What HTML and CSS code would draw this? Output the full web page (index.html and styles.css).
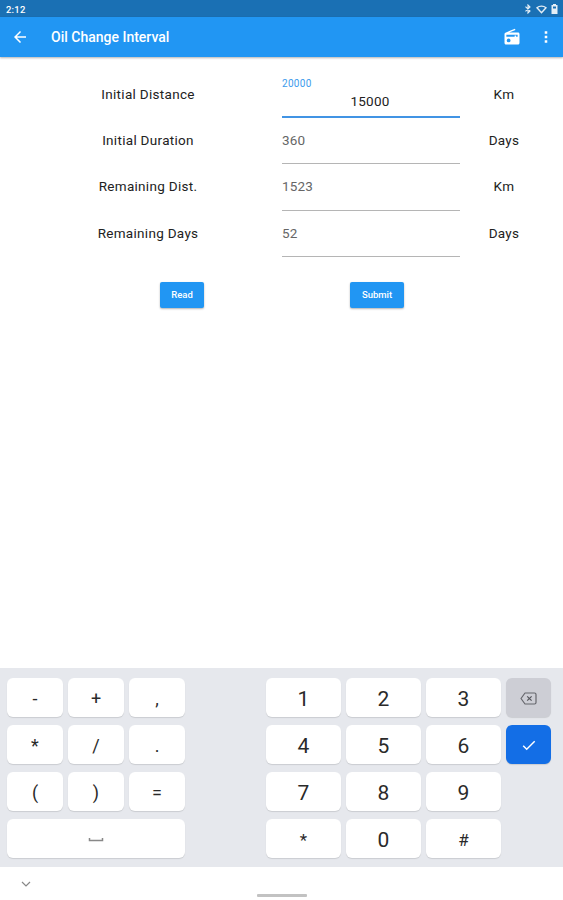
FILE: index.html
```html
<!DOCTYPE html>
<html lang="en">
<head>
    <meta charset="UTF-8">
    <meta name="viewport" content="width=device-width, initial-scale=1.0">
    <title>Oil Change Interval</title>
    <link rel="stylesheet" href="styles.css">
</head>
<body>
    <div class="status-bar">
        <span class="clock">2:12</span>
        <div class="status-icons">
            <svg width="8" height="10" viewBox="0 0 8 10"><path d="M1.5 2.700L6 7L4 9V1L6 3L1.500 7.300" fill="none" stroke="#e4eef6" stroke-width="1.100"/></svg>
            <svg width="11" height="9" viewBox="0 0 11 9"><path d="M1 2.700C3.500.6 7.500.6 10 2.700L5.500 7.800Z" fill="none" stroke="#e4eef6" stroke-width="1.400"/></svg>
            <svg width="7" height="10" viewBox="0 0 7 10"><path d="M2 0H5V1H6.500V10H.5V1H2Z" fill="#e4eef6"/><path d="M2 2.500H5V4.500H2Z" fill="#1a70b4"/></svg>
        </div>
    </div>

    <header class="app-bar">
        <svg class="back" width="18" height="18" viewBox="0 0 24 24"><path d="M20 11H7.800l5.600-5.600L12 4l-8 8 8 8 1.400-1.400L7.800 13H20z" fill="#fff"/></svg>
        <h1>Oil Change Interval</h1>
        <svg class="radio" width="18" height="18" viewBox="0 0 24 24"><path d="M3.200 6.200C2.500 6.500 2 7.200 2 8v12c0 1.100.9 2 2 2h16c1.100 0 2-.9 2-2V8c0-1.100-.9-2-2-2H8.300l8.300-3.300L15.900 1z" fill="#fff"/><path d="M4.500 9h15v2.500h-2V10h-2v1.500h-11z" fill="#2196f3"/><circle cx="7.500" cy="16.500" r="2.500" fill="#2196f3"/></svg>
        <svg class="more" width="18" height="18" viewBox="0 0 24 24"><path d="M10.300 4.300h3.400v3.400h-3.400zM10.300 10.300h3.400v3.400h-3.400zM10.300 16.300h3.400v3.400h-3.400z" fill="#fff"/></svg>
    </header>

    <main>
        <form class="interval-form">
            <div class="row">
                <label for="initDist">Initial Distance</label>
                <div class="field active">
                    <span class="hint">20000</span>
                    <input type="text" id="initDist" value="15000">
                </div>
                <span class="unit">Km</span>
            </div>
            <div class="row">
                <label for="initDur">Initial Duration</label>
                <div class="field"><input type="text" id="initDur" value="360"></div>
                <span class="unit">Days</span>
            </div>
            <div class="row">
                <label for="remDist">Remaining Dist.</label>
                <div class="field"><input type="text" id="remDist" value="1523"></div>
                <span class="unit">Km</span>
            </div>
            <div class="row">
                <label for="remDays">Remaining Days</label>
                <div class="field"><input type="text" id="remDays" value="52"></div>
                <span class="unit">Days</span>
            </div>
            <div class="actions">
                <button type="button" class="btn read">Read</button>
                <button type="button" class="btn submit">Submit</button>
            </div>
        </form>
    </main>

    <div class="keyboard">
        <div class="keys symbols">
            <button class="key">-</button>
            <button class="key">+</button>
            <button class="key">,</button>
            <button class="key">*</button>
            <button class="key">/</button>
            <button class="key">.</button>
            <button class="key">(</button>
            <button class="key">)</button>
            <button class="key">=</button>
            <button class="key space">
                <svg width="16" height="6" viewBox="0 0 16 6"><path d="M1.500 1v2.500h13V1" fill="none" stroke="#888" stroke-width="1.500"/></svg>
            </button>
        </div>
        <div class="keys numbers">
            <button class="key">1</button>
            <button class="key">2</button>
            <button class="key">3</button>
            <button class="key">4</button>
            <button class="key">5</button>
            <button class="key">6</button>
            <button class="key">7</button>
            <button class="key">8</button>
            <button class="key">9</button>
            <button class="key sign">*</button>
            <button class="key">0</button>
            <button class="key sign">#</button>
        </div>
        <div class="keys side">
            <button class="key delete">
                <svg width="17" height="13" viewBox="0 0 17 13"><path d="M5 1H14.500Q16 1 16 2.500V10.500Q16 12 14.500 12H5L1 6.500Z" fill="none" stroke="#65666c" stroke-width="1.200" stroke-linejoin="round"/><path d="M7.200 4.300L11.600 8.700M11.600 4.300L7.200 8.700" stroke="#55565c" stroke-width="1.200"/></svg>
            </button>
            <button class="key enter">
                <svg width="14" height="11" viewBox="0 0 14 11"><path d="M1.200 5.700L4.700 9.200L12.700 1.200" fill="none" stroke="#fff" stroke-width="1.500"/></svg>
            </button>
        </div>
    </div>

    <div class="nav-bar">
        <svg class="hide" width="10" height="7" viewBox="0 0 10 7"><path d="M1 1L5 5L9 1" fill="none" stroke="#888" stroke-width="1.200"/></svg>
        <div class="handle"></div>
    </div>
</body>
</html>
```
FILE: styles.css
```css
* {
    margin: 0;
    padding: 0;
    box-sizing: border-box;
    font-family: Roboto, "Liberation Sans", sans-serif;
}

body {
    height: 900px;
    display: flex;
    flex-direction: column;
    background: #fff;
    color: #222;
    overflow: hidden;
}

svg {
    display: block;
    flex: none;
}

.status-bar {
    height: 17px;
    padding: 1px 5px 0 6px;
    display: flex;
    align-items: center;
    justify-content: space-between;
    background: #1a70b4;
    color: #fff;
}

.clock {
    font-size: 9.5px;
    font-weight: 500;
    letter-spacing: 0.2px;
}

.status-icons {
    display: flex;
    align-items: center;
    gap: 4px;
}

.app-bar {
    height: 40px;
    padding: 0 8px 0 11px;
    display: flex;
    align-items: center;
    background: #2196f3;
    color: #fff;
    box-shadow: 0 1px 2px rgba(0,0,0,0.3);
}

.app-bar h1 {
    flex: 1;
    margin-left: 22px;
    font-size: 14px;
    font-weight: 500;
}

.more {
    margin-left: 16px;
}

main {
    flex: 1;
    padding: 15px 15px 0 14px;
}

.row {
    height: 46.2px;
    display: grid;
    grid-template-columns: 268px 178px 88px;
    align-items: center;
    text-align: center;
    font-size: 13.5px;
    letter-spacing: 0.3px;
}

.row label,
.unit {
    padding-bottom: 2px;
}

.row:last-of-type label {
    padding-bottom: 0;
}

.field {
    height: 100%;
    display: flex;
    flex-direction: column;
    border-bottom: 1px solid #b5b5b5;
}

.field input {
    width: 100%;
    height: 100%;
    padding-bottom: 1px;
    border: none;
    outline: none;
    background: none;
    font-size: 13.5px;
    letter-spacing: 0.2px;
    color: #666;
}

.field.active {
    border-bottom: 2px solid #4194e4;
}

.field.active input {
    flex: 1;
    padding-bottom: 4px;
    padding-right: 2px;
    text-align: center;
    color: #222;
}

.hint {
    padding-top: 6px;
    text-align: left;
    font-size: 10px;
    line-height: 12px;
    color: #3d9bec;
}

.actions {
    display: flex;
    margin-top: 25px;
    padding-left: 146px;
}

.btn {
    height: 26px;
    border: none;
    border-radius: 2px;
    background: #2196f3;
    color: #fff;
    font-size: 9.5px;
    font-weight: 500;
    box-shadow: 0 1px 2px rgba(0,0,0,0.3);
}

.read {
    width: 44px;
}

.submit {
    width: 54px;
    margin-left: 146px;
}

.keyboard {
    height: 199px;
    padding: 10px 12px 0 7px;
    display: flex;
    background: #e6e8ed;
}

.keys {
    display: grid;
    grid-auto-rows: 39px;
    align-content: start;
    gap: 8px 5px;
}

.symbols {
    grid-template-columns: repeat(3, 56px);
}

.numbers {
    grid-template-columns: repeat(3, 75px);
    margin-left: 81px;
}

.side {
    grid-template-columns: 45px;
    margin-left: 5px;
}

.key {
    display: flex;
    align-items: center;
    justify-content: center;
    padding-top: 2px;
    border: none;
    border-radius: 6px;
    background: #fff;
    box-shadow: 0 1px 1px rgba(0,0,0,0.12);
    color: #2a2a2a;
    font-size: 18px;
}

.numbers .key {
    font-size: 21px;
}

.numbers .sign {
    font-size: 17px;
}

.space {
    grid-column: span 3;
}

.delete {
    background: #cdced5;
}

.enter {
    background: #136ee6;
}

.nav-bar {
    position: relative;
    height: 33px;
    display: flex;
    align-items: center;
    justify-content: center;
}

.hide {
    position: absolute;
    left: 21px;
    top: 14px;
}

.handle {
    width: 50px;
    height: 3px;
    margin-top: 23px;
    border-radius: 1px;
    background: #c2c2c2;
}
```
